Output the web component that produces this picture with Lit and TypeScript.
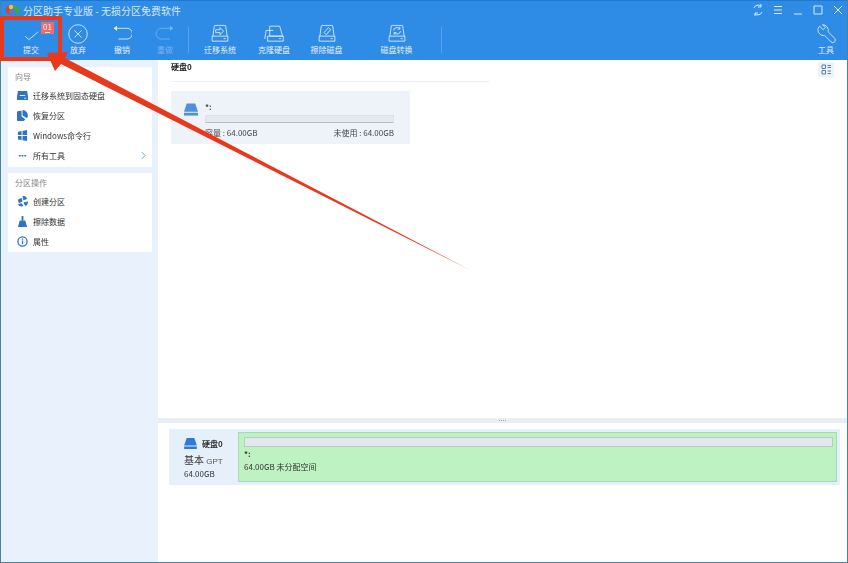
import { LitElement, html, css, svg } from "lit";
import { customElement } from "lit/decorators.js";

const diskBase = svg`<path d="M4 17 6 3a1 1 0 0 1 1-1h14a1 1 0 0 1 1 1l2 14" /><path d="M3 17h22v7H3z" /><path d="M19 20.500h3" />`;

const icons: Record<string, unknown> = {
  check: svg`<path d="M6 17l5 5L24 11" />`,
  cancel: svg`<circle cx="14" cy="14" r="13" /><path d="M9 9l10 10M19 9L9 19" />`,
  undo: svg`<path d="M3 6h18a7 7 0 0 1 0 15H9" /><path d="M7 3 3 6l4 3" fill="currentColor" />`,
  redo: svg`<path d="M25 6H9a7 7 0 0 0 0 15h12" /><path d="M21 3l4 3-4 3" fill="currentColor" />`,
  migrate: svg`${diskBase}<path d="M8 8h6V5l5 5-5 5v-3H8z" />`,
  clone: svg`<path d="M1 21 3 9h10M8 3h14l4 14H8z" /><path d="M5 17h22v7H5z" /><path d="M21 20.500h3" />`,
  wipe: svg`${diskBase}<path d="M10 12l6-7 3 3-6 7z" />`,
  convert: svg`${diskBase}<path d="M9 9a5 5 0 0 1 9-2M19 10a5 5 0 0 1-9 2" /><path d="M18 4v3h-3M10 15v-3h3" />`,
};

const tools = [
  { label: "提交", icon: "check", width: 46 },
  { label: "放弃", icon: "cancel", width: 48 },
  { label: "撤销", icon: "undo", width: 40 },
  { label: "重做", icon: "redo", width: 46, off: true },
  { sep: true },
  { label: "迁移系统", icon: "migrate", width: 62 },
  { label: "克隆硬盘", icon: "clone", width: 46 },
  { label: "擦除磁盘", icon: "wipe", width: 59 },
  { label: "磁盘转换", icon: "convert", width: 81 },
  { spacer: true },
  { sep: true },
];

const navIcons: Record<string, unknown> = {
  ssd: svg`<path d="M1 1h10l1 6v4H0V7z" /><path d="M3 6h6" stroke="#fff" fill="none" /><path d="M8 9h2" stroke="#fff" fill="none" />`,
  pie: svg`<path d="M6 0a6 6 0 0 1 5 9L6 6z" /><path d="M5 1v6l4 3a6 6 0 1 1-4-9z" />`,
  win: svg`<path d="M1 2l4-1v4.500H1zM6 1l5-1v5.500H6zM1 6.500h4V11l-4-.7zM6 6.500h5V12l-5-.8z" />`,
  more: svg`<path d="M2 5.500h2v1.500H2zM5 5.500h2v1.500H5zM8 5.500h2v1.500H8z" />`,
  create: svg`<path d="M6 0a4 4 0 0 1 5 3L7 5z" /><path d="M1 4l4-2 1 4-4 2z" /><path d="M7 7l5-1a5 5 0 0 1-3 5z" /><path d="M1 9l4-1 2 3a5 5 0 0 1-6-2z" />`,
  broom: svg`<path d="M5 0h2v5H5z" /><path d="M3 5h6l2 7H1z" />`,
};

const nav1 = [
  { icon: "ssd", label: "迁移系统到固态硬盘" },
  { icon: "pie", label: "恢复分区" },
  { icon: "win", label: "Windows命令行" },
  { icon: "more", label: "所有工具", chevron: true },
];

const nav2 = [
  { icon: "create", label: "创建分区" },
  { icon: "broom", label: "擦除数据" },
  { icon: "info", label: "属性" },
];

@customElement("app-root")
export class AppRoot extends LitElement {
  static styles = css`
    :host {
      display: block;
      position: relative;
      width: 848px;
      height: 563px;
      overflow: hidden;
      background: #fff;
      font-family: "Noto Sans CJK SC", "Liberation Sans", sans-serif;
      color: #333;
      font-size: 8px;
    }

    .window {
      display: flex;
      flex-direction: column;
      height: 100%;
      box-sizing: border-box;
      border-left: 1px solid #3f86a8;
      border-right: 1px solid #3f86a8;
      border-bottom: 1px solid #3f86a8;
      filter: blur(0.3px);
    }

    .head {
      background: #2e8be6;
      border-top: 1px solid #1f78cf;
      color: #fff;
      height: 60px;
      box-sizing: border-box;
      flex: none;
    }

    .title-bar {
      display: flex;
      align-items: center;
      height: 18px;
      padding-left: 4px;
      font-size: 10px;
      color: #d8eafb;
    }

    .logo {
      width: 15px;
      height: 12px;
      margin-right: 3px;
      flex: none;
    }

    .win-buttons {
      margin-left: auto;
      display: flex;
      align-items: center;
      gap: 8px;
      padding-right: 3px;
    }

    .win-buttons svg {
      width: 12px;
      height: 12px;
      fill: none;
      stroke: #d8eafb;
      stroke-width: 1;
    }

    .toolbar {
      display: flex;
      height: 41px;
      padding-left: 7px;
    }

    .tool {
      display: flex;
      flex-direction: column;
      align-items: center;
      flex: none;
      font-size: 8px;
      line-height: 10px;
      color: #e3f0fc;
    }

    .tool svg {
      width: 20px;
      height: 20px;
      margin: 5px 0 1px;
      fill: none;
      stroke: currentColor;
      stroke-width: 1.200;
    }

    .tool.off {
      color: #78b3ee;
    }

    .spacer {
      width: 4px;
      flex: none;
    }

    .sep {
      width: 1px;
      height: 26px;
      margin-top: 8px;
      background: #5aa3ea;
      flex: none;
    }

    .tool.tools-end {
      margin-left: auto;
      margin-right: 11px;
    }

    .body {
      display: flex;
      flex: 1;
      min-height: 0;
    }

    .side {
      width: 157px;
      flex: none;
      box-sizing: border-box;
      background: #e9f2fc;
      padding: 7px 6px 0 7px;
      display: flex;
      flex-direction: column;
      gap: 6px;
    }

    .card {
      background: #fff;
      padding: 4px 0 0;
    }

    .card.one {
      height: 100px;
      box-sizing: border-box;
    }

    .card.two {
      height: 79px;
      box-sizing: border-box;
    }

    .card h3 {
      margin: 0;
      font-weight: 400;
      font-size: 8px;
      line-height: 12px;
      color: #888;
      padding-left: 7px;
      height: 14px;
    }

    .row {
      display: flex;
      align-items: center;
      height: 20px;
      padding-left: 9px;
      color: #333;
    }

    .row svg {
      width: 11px;
      height: 11px;
      fill: #2f74c0;
      margin-right: 5px;
      flex: none;
    }

    .row .chev {
      margin-left: auto;
      margin-right: 6px;
      width: 5px;
      height: 7px;
      fill: none;
      stroke: #6fa8dc;
      stroke-width: 1.200;
    }

    .main {
      flex: 1;
      min-width: 0;
      display: flex;
      flex-direction: column;
    }

    .upper {
      height: 358px;
      flex: none;
      padding: 1px 0 0 13px;
      box-sizing: border-box;
      position: relative;
    }

    .disk-title {
      font-weight: 700;
      line-height: 12px;
      padding: 0 0 8px;
      color: #222;
      width: 319px;
      border-bottom: 1px solid #f0f2f5;
    }

    .disk-card {
      margin-top: 9px;
      width: 239px;
      height: 53px;
      box-sizing: border-box;
      background: #eef2f9;
      padding: 10px 16px 0 13px;
      display: flex;
      gap: 7px;
    }

    .drive {
      width: 14px;
      height: 13px;
      fill: #4f8fdc;
      flex: none;
      margin-top: 2px;
    }

    .disk-info {
      flex: 1;
      font-size: 8px;
      color: #444;
    }

    .letter {
      line-height: 12px;
      height: 14px;
      font-weight: 700;
    }

    .bar {
      height: 8px;
      background: #e6e9ee;
      border: 1px solid #dde1e6;
      border-bottom-color: #b9bec5;
      box-sizing: border-box;
    }

    .stats {
      display: flex;
      justify-content: space-between;
      margin-top: 4px;
      line-height: 12px;
    }

    .list-btn {
      position: absolute;
      top: 2px;
      right: 13px;
      width: 16px;
      height: 15px;
      background: #eef3fa;
      display: flex;
      align-items: center;
      justify-content: center;
    }

    .list-btn svg {
      width: 11px;
      height: 11px;
      fill: none;
      stroke: #5a7fa8;
      stroke-width: 1;
    }

    .splitter {
      height: 5px;
      background: #e9eef4;
      flex: none;
      display: flex;
      align-items: center;
      justify-content: center;
      gap: 1px;
    }

    .splitter i {
      width: 1px;
      height: 1px;
      background: #9aa5b2;
    }

    .lower {
      flex: 1;
      padding: 6px 7px 0 11px;
      background: #fff;
    }

    .map {
      display: flex;
      height: 56px;
      background: #e6f0fb;
      padding: 3px 3px 3px 0;
      box-sizing: border-box;
    }

    .map-info {
      width: 69px;
      flex: none;
      font-size: 8px;
      padding: 5px 0 0 15px;
      box-sizing: border-box;
      color: #333;
    }

    .map-name {
      display: flex;
      align-items: center;
      gap: 5px;
      font-weight: 700;
      height: 13px;
    }

    .map-name svg {
      width: 13px;
      height: 11px;
      fill: #2f7ad6;
    }

    .map-type {
      font-size: 10px;
      line-height: 13px;
      margin-top: 3px;
      white-space: nowrap;
    }

    .map-type span {
      font-family: "Liberation Sans", sans-serif;
      font-size: 8px;
      color: #555;
    }

    .map-size {
      line-height: 11px;
      font-size: 8px;
    }

    .partition {
      flex: 1;
      background: #bff2c2;
      border: 1px solid #a8d9b6;
      box-sizing: border-box;
      padding: 4px 3px 0 5px;
      font-size: 8px;
      color: #333;
    }

    .partition .track {
      height: 10px;
      background: #e5e7f0;
      border: 1px solid #b4d0b8;
      box-sizing: border-box;
    }

    .partition .letter {
      margin-top: 1px;
      height: 13px;
    }

    .partition .free {
      line-height: 12px;
    }

    .highlight {
      position: absolute;
      left: 0;
      top: 16px;
      width: 62px;
      height: 45px;
      box-sizing: border-box;
      border: 4px solid #e8391d;
    }

    .badge {
      position: absolute;
      left: 41px;
      top: 22px;
      width: 13px;
      height: 12px;
      background: #f26a6a;
      color: #fff;
      font-size: 8px;
      line-height: 9px;
      text-align: center;
    }

    .badge::after {
      content: "";
      position: absolute;
      left: 4px;
      bottom: 1px;
      width: 5px;
      height: 1px;
      background: #fff;
    }

    .arrow {
      position: absolute;
      left: 0;
      top: 0;
      width: 848px;
      height: 563px;
      pointer-events: none;
    }
  `;

  renderNav(items: { icon: string; label: string; chevron?: boolean }[]) {
    return items.map(
      (item) => html`
        <div class="row">
          ${item.icon === "info"
            ? html`<svg viewBox="0 0 12 12">
                <circle cx="6" cy="6" r="5" fill="none" stroke="#2f74c0" stroke-width="1.400" />
                <path d="M5.300 5h1.400v4H5.300zM5.300 2.800h1.400v1.300H5.300z" />
              </svg>`
            : html`<svg viewBox="0 0 12 12">${navIcons[item.icon]}</svg>`}
          <span>${item.label}</span>
          ${item.chevron
            ? html`<svg class="chev" viewBox="0 0 6 8"><path d="M1 0l4 4-4 4" /></svg>`
            : ""}
        </div>
      `
    );
  }

  render() {
    const driveShape = svg`<path d="M3 0h9l3 9H0z" /><path d="M0 10h15v3H0z" />`;
    return html`
      <div class="window">
        <div class="head">
          <div class="title-bar">
            <svg class="logo" viewBox="0 0 15 12">
              <circle cx="5" cy="6" r="4.500" fill="#d9413a" />
              <circle cx="10" cy="6" r="4.500" fill="#3fa648" />
              <circle cx="7.500" cy="8" r="3.500" fill="#4f7fd0" />
              <circle cx="6" cy="3" r="2.200" fill="#f0c23c" />
            </svg>
            <span>分区助手专业版 - 无损分区免费软件</span>
            <div class="win-buttons">
              <svg viewBox="0 0 12 12">
                <path d="M2 4a4.500 4.500 0 0 1 7-2M10 8a4.500 4.500 0 0 1-7 2" />
                <path d="M9 0v3H6M3 12V9h3" />
              </svg>
              <svg viewBox="0 0 12 12"><path d="M2 2.500h8M2 6h8M2 9.500h8" /></svg>
              <svg viewBox="0 0 12 12"><path d="M2 10h8" /></svg>
              <svg viewBox="0 0 12 12"><path d="M2 2h8v8H2z" /></svg>
              <svg viewBox="0 0 12 12"><path d="M2 2l8 8M10 2l-8 8" /></svg>
            </div>
          </div>
          <div class="toolbar">
            ${tools.map((t) => {
              if (t.spacer) return html`<div class="spacer"></div>`;
              if (t.sep) return html`<div class="sep"></div>`;
              return html`
                <div class="tool ${t.off ? "off" : ""}" style="width:${t.width}px">
                  <svg viewBox="0 0 28 28">${icons[t.icon!]}</svg>
                  <span>${t.label}</span>
                </div>
              `;
            })}
            <div class="tool tools-end">
              <svg viewBox="0 0 28 28">
                <path d="M5 3l5 5 3-3-4-4a8 8 0 0 1 8 10l9 9a3 3 0 0 1-5 5l-9-9A8 8 0 0 1 3 6z" />
              </svg>
              <span>工具</span>
            </div>
          </div>
        </div>
        <div class="body">
          <div class="side">
            <div class="card one">
              <h3>向导</h3>
              ${this.renderNav(nav1)}
            </div>
            <div class="card two">
              <h3>分区操作</h3>
              ${this.renderNav(nav2)}
            </div>
          </div>
          <div class="main">
            <div class="upper">
              <div class="disk-title">硬盘0</div>
              <div class="disk-card">
                <svg class="drive" viewBox="0 0 15 13">${driveShape}</svg>
                <div class="disk-info">
                  <div class="letter">*:</div>
                  <div class="bar"></div>
                  <div class="stats">
                    <span>容量 : 64.00GB</span>
                    <span>未使用 : 64.00GB</span>
                  </div>
                </div>
              </div>
              <div class="list-btn">
                <svg viewBox="0 0 11 11">
                  <path d="M1 1h3.500v3.500H1zM1 6.500h3.500V10H1zM6.500 1.500H10M6.500 3.500H10M6.500 7H10M6.500 9.500H10" />
                </svg>
              </div>
            </div>
            <div class="splitter"><i></i><i></i><i></i><i></i></div>
            <div class="lower">
              <div class="map">
                <div class="map-info">
                  <div class="map-name">
                    <svg viewBox="0 0 15 13">${driveShape}</svg>
                    <span>硬盘0</span>
                  </div>
                  <div class="map-type">基本 <span>GPT</span></div>
                  <div class="map-size">64.00GB</div>
                </div>
                <div class="partition">
                  <div class="track"></div>
                  <div class="letter">*:</div>
                  <div class="free">64.00GB 未分配空间</div>
                </div>
              </div>
            </div>
          </div>
        </div>
      </div>
      <div class="highlight"></div>
      <div class="badge">01</div>
      <svg class="arrow" viewBox="0 0 848 563">
        <polygon points="470,270 65,58 68,52 47,53 55,71 61,64" fill="#e8391d" />
      </svg>
    `;
  }
}
